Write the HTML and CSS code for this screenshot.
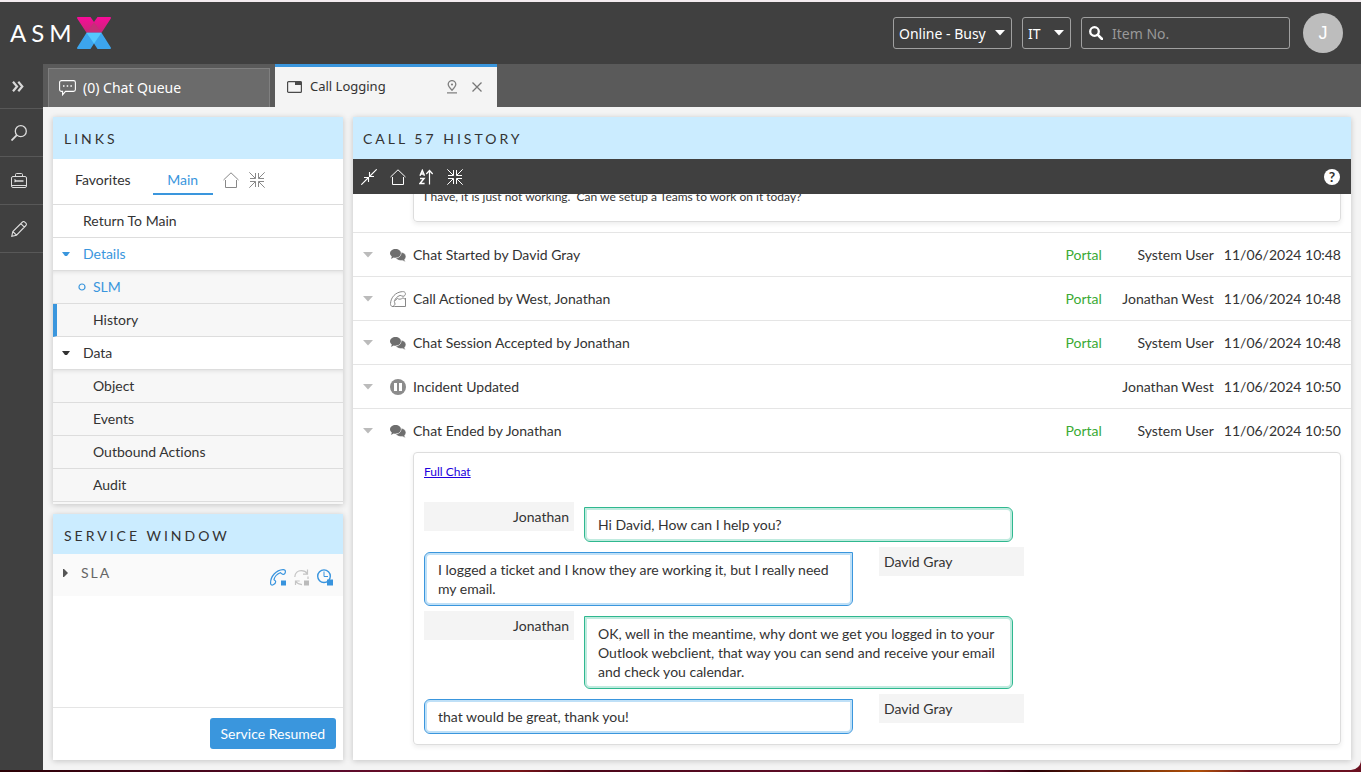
FILE: index.html
```
<!DOCTYPE html>
<html lang="en">
<head>
<meta charset="utf-8">
<title>ASMX - Call Logging</title>
<link rel="stylesheet" href="styles.css">
</head>
<body>
<svg class="sprite" aria-hidden="true">
  <symbol id="i-house" viewBox="0 0 16 16"><path d="M.5 8 8 .8 15.500 8M2.500 8v7.500h11V8" fill="none" stroke="currentColor"/></symbol>
  <symbol id="i-collapse" viewBox="0 0 16 16"><path d="M.3.3l6 6M1 6.500h5.500V1M15.700.3l-6 6M15 6.500H9.500V1M.3 15.700l6-6M1 9.500h5.500V15M15.700 15.700l-6-6M15 9.500H9.500V15" fill="none" stroke="currentColor"/></symbol>
  <symbol id="i-down" viewBox="0 0 10 6"><path d="M0 0h10L5 5.500z" fill="currentColor"/></symbol>
  <symbol id="i-chats" viewBox="0 0 16 13"><path d="M5.600 0C8.700 0 11 1.900 11 4.300S8.700 8.700 5.600 8.700c-.7 0-1.300-.1-1.900-.3-.8.7-1.800 1.200-3.100 1.300.7-.7 1.100-1.500 1.200-2.300C.7 6.600 0 5.500 0 4.300 0 1.900 2.500 0 5.600 0z" fill="#6e6e6e"/><path d="M11.300 3.300c2.600.3 4.600 2 4.600 4.300 0 1.100-.5 2.100-1.400 2.800.1.800.5 1.500 1.100 2.100-1.200-.1-2.100-.5-2.900-1.100-2.800.6-5.900-.3-6.900-2.300 3.200-.2 5.700-2.500 5.500-5.800z" fill="#6e6e6e" stroke="#fff" stroke-width=".4"/></symbol>
</svg>
<div class="app">
  <header class="topbar">
    <div class="logo">
      <span class="logo-text">ASM</span>
      <svg class="logo-mark" viewBox="0 0 34 32" aria-hidden="true">
        <defs>
          <linearGradient id="pink" x1="0" y1="0" x2="0" y2="1"><stop offset="0" stop-color="#f90b9a"/><stop offset="1" stop-color="#c62877"/></linearGradient>
        </defs>
        <path d="M1 0h12.500L17 5 20.500 0H33c1 0 1.200.8.800 1.500L24.500 15.700h-15L.2 1.500C-.2.800 0 0 1 0z" fill="url(#pink)"/>
        <path d="M17 5l7.500 10.700h-15z" fill="#c72d78"/>
        <path d="M9.500 15.700h15l9.300 14.800c.4.700.2 1.500-.8 1.500H20.500L17 26.500 13.500 32H1c-1 0-1.200-.8-.8-1.500z" fill="#3ca5ee"/>
        <path d="M9.500 15.700h15L17 26.500z" fill="#54c8ff"/>
      </svg>
    </div>
    <div class="topbar-tools">
      <div class="picker picker-status">
        <select class="picker-select" aria-label="Status"><option>Online - Busy</option></select>
        <svg class="picker-arrow" aria-hidden="true"><use href="#i-down"/></svg>
      </div>
      <div class="picker picker-group">
        <select class="picker-select" aria-label="Group"><option>IT</option></select>
        <svg class="picker-arrow" aria-hidden="true"><use href="#i-down"/></svg>
      </div>
      <label class="search">
        <svg class="search-icon" viewBox="0 0 14 14" aria-hidden="true"><circle cx="5.500" cy="5.500" r="4.300" fill="none" stroke="#fff" stroke-width="2.300"/><path d="M8.800 8.800l4.200 4.200" stroke="#fff" stroke-width="2.600" stroke-linecap="round"/></svg>
        <input class="search-input" type="text" placeholder="Item No." aria-label="Item No.">
      </label>
      <button class="avatar" type="button">J</button>
    </div>
  </header>

  <div class="workspace">
    <nav class="rail" aria-label="Tools">
      <button class="rail-item rail-expand" type="button" aria-label="Expand">
        <svg width="12" height="11" viewBox="0 0 12 11"><path d="M1 .8l4 4.700-4 4.700M6.300.8l4 4.700-4 4.700" fill="none" stroke="#d8d8d8" stroke-width="2.200"/></svg>
      </button>
      <button class="rail-item" type="button" aria-label="Search">
        <svg width="16" height="16" viewBox="0 0 16 16"><circle cx="9.800" cy="6.200" r="5.500" fill="none" stroke="#ddd" stroke-width="1.300"/><path d="M5.800 10.200L.5 15.500" stroke="#ddd" stroke-width="1.800"/></svg>
      </button>
      <button class="rail-item" type="button" aria-label="Toolbox">
        <svg width="16" height="15" viewBox="0 0 16 15"><g fill="none" stroke="#ddd"><rect x=".5" y="3.500" width="15" height="11" rx="1.500"/><path d="M4.500 3.500v-2c0-.6.4-1 1-1h5c.6 0 1 .4 1 1v2M1 12.500h14" /><path d="M3.500 6.500l1.500 1.500-1.500 1M5 8h7.500" stroke-width="1.300"/></g></svg>
      </button>
      <button class="rail-item" type="button" aria-label="Edit">
        <svg width="16" height="16" viewBox="0 0 16 16"><g fill="none" stroke="#ddd" stroke-width="1.100"><path d="M.8 15.200l1-4.700L11.500 1c.7-.7 1.600-.6 2.300.1l1.100 1.100c.7.7.7 1.600 0 2.300L5.500 14.200zM9.800 2.600l3.600 3.600M1.800 10.500l3.700 3.700"/></g></svg>
      </button>
    </nav>

    <div class="stage">
      <div class="tabs">
        <button class="tab" type="button">
          <svg class="tab-icon" width="17" height="16" viewBox="0 0 17 16"><path d="M2.500.6h12c1.100 0 1.900.8 1.900 1.900v7c0 1.100-.8 1.900-1.900 1.900H6.500L3.600 14.800v-3.400H2.500C1.400 11.400.6 10.600.6 9.500v-7C.6 1.400 1.400.6 2.500.6z" fill="none" stroke="#fff" stroke-width="1.100"/><path d="M4 5.200h1.500v1.500H4zM7.700 5.200h1.500v1.500H7.700zM11.400 5.200h1.500v1.500h-1.500z" fill="#fff"/></svg>
          <span>(0) Chat Queue</span>
        </button>
        <div class="tab tab-active">
          <svg class="tab-icon" width="15" height="12" viewBox="0 0 15 12"><rect x=".6" y=".6" width="13.800" height="10.800" rx="1" fill="none" stroke="#4a4a4a" stroke-width="1.200"/><path d="M8 .5h6.500V4H8z" fill="#4a4a4a"/></svg>
          <span class="tab-label">Call Logging</span>
          <button class="tab-action" type="button" aria-label="Pin">
            <svg width="10" height="14" viewBox="0 0 10 14"><path d="M5 10.300C3 8.200 1.200 6.300 1.200 4.300A3.700 3.700 0 0 1 5 .6a3.700 3.700 0 0 1 3.800 3.700c0 2-1.800 3.900-3.800 6zM0 12.900h10" fill="none" stroke="#808080" stroke-width="1.300"/><circle cx="5" cy="4.500" r="1.100" fill="#808080"/></svg>
          </button>
          <button class="tab-action" type="button" aria-label="Close">
            <svg width="10" height="10" viewBox="0 0 10 10"><path d="M.5.5l9 9M9.500.5l-9 9" stroke="#777" stroke-width="1.300"/></svg>
          </button>
        </div>
      </div>

      <main class="content">
        <div class="side">
          <section class="panel links">
            <h2 class="panel-title">LINKS</h2>
            <div class="link-tabs">
              <button class="link-tab" type="button">Favorites</button>
              <button class="link-tab link-tab-active" type="button">Main</button>
              <button class="icon-button" type="button" aria-label="Home"><svg width="16" height="16"><use href="#i-house"/></svg></button>
              <button class="icon-button" type="button" aria-label="Collapse"><svg width="16" height="16"><use href="#i-collapse"/></svg></button>
            </div>
            <ul class="tree">
              <li class="node"><a class="node-link" href="#">Return To Main</a></li>
              <li class="node node-blue"><svg class="node-caret" width="8" height="4" viewBox="0 0 8 4"><path d="M0 0h8L5 4H3z" fill="currentColor"/></svg><a class="node-link" href="#">Details</a></li>
              <li class="node node-sub node-first node-blue"><svg class="node-dot" width="8" height="8" viewBox="0 0 8 8"><circle cx="4" cy="4" r="3" fill="none" stroke="currentColor" stroke-width="1.200"/></svg><a class="node-link" href="#">SLM</a></li>
              <li class="node node-sub node-current"><a class="node-link" href="#">History</a></li>
              <li class="node"><svg class="node-caret" width="8" height="4" viewBox="0 0 8 4"><path d="M0 0h8L5 4H3z" fill="currentColor"/></svg><a class="node-link" href="#">Data</a></li>
              <li class="node node-sub node-first"><a class="node-link" href="#">Object</a></li>
              <li class="node node-sub"><a class="node-link" href="#">Events</a></li>
              <li class="node node-sub"><a class="node-link" href="#">Outbound Actions</a></li>
              <li class="node node-sub"><a class="node-link" href="#">Audit</a></li>
            </ul>
          </section>

          <section class="panel service">
            <h2 class="panel-title panel-title-short">SERVICE WINDOW</h2>
            <div class="sla">
              <svg class="sla-caret" width="5" height="8" viewBox="0 0 5 8"><path d="M0 0h1l4 4-4 4H0z" fill="#555"/></svg>
              <span class="sla-name">SLA</span>
              <div class="sla-icons">
                <svg width="16" height="17" viewBox="0 0 16 17"><path d="M3.200 15.800c-1.600.8-2.700-.3-2.600-1.900C.5 7.500 6 1 13 .6c1.300-.1 2.400.6 2.400 1.800 0 1.700-.9 3-2.400 2.900-1.500 0-1.900-1.600-2.800-1.600C7.500 4.800 4.600 7.800 4 10.500c0 .9 1.700.9 1.700 2.300 0 1.400-1.200 2.400-2.500 3z" fill="none" stroke="#3894de" stroke-width="1.200"/><path d="M11 11.500h5v5h-5z" fill="#3894de"/></svg>
                <svg width="15" height="17" viewBox="0 0 15 17"><path d="M.8 8C1 3.800 4 1.700 7.300 1.700c2.500 0 4.700 1 6 3M13.500.5v4.700H9M14 7.500v2.500M1.500 16v-4h4.200M1.800 12.500c1.500 2 3.600 3 6.200 3.200" fill="none" stroke="#c4c4c4" stroke-width="1.200"/><path d="M10 11.500h5v5h-5z" fill="#bbb"/></svg>
                <svg width="16" height="17" viewBox="0 0 16 17"><circle cx="7" cy="7.200" r="6.300" fill="none" stroke="#3894de" stroke-width="1.400"/><path d="M7 2.500V7.500h4" fill="none" stroke="#3894de"/><path d="M10 10.500h6v6h-6z" fill="#3894de"/></svg>
              </div>
            </div>
            <div class="service-actions"><button class="primary" type="button">Service Resumed</button></div>
          </section>
        </div>

        <section class="panel history">
          <h2 class="panel-title">CALL 57 HISTORY</h2>
          <div class="toolbar">
            <button class="tool" type="button" aria-label="Shrink"><svg width="16" height="16" viewBox="0 0 16 16"><path d="M15.700.3L9 7M8.500 3v4.500H13M.3 15.700L7 9M3 8.500h4.500V13" fill="none" stroke="#fff" stroke-width="1.100"/></svg></button>
            <button class="tool" type="button" aria-label="Home"><svg width="16" height="16"><use href="#i-house"/></svg></button>
            <button class="tool" type="button" aria-label="Sort"><svg width="15" height="16" viewBox="0 0 15 16"><path d="M1 6.800L3.300 1.500 5.500 6.800M1.800 5h3M1 9.500h4L1 14.500h4.600" fill="none" stroke="#fff" stroke-width="1.500"/><path d="M10.500 15.500V1.500M7.300 5L10.500 1.500 13.700 5" fill="none" stroke="#fff" stroke-width="1.200"/></svg></button>
            <button class="tool" type="button" aria-label="Collapse all"><svg width="16" height="16"><use href="#i-collapse"/></svg></button>
            <button class="help" type="button">?</button>
          </div>
          <div class="log">
            <div class="card card-note">
              <p class="note">I have, it is just not working.&nbsp; Can we setup a Teams to work on it today?</p>
            </div>
            <article class="entry">
              <svg class="entry-caret"><use href="#i-down"/></svg>
              <svg class="entry-icon entry-chat" width="16" height="13"><use href="#i-chats"/></svg>
              <span class="entry-title">Chat Started by David Gray</span>
              <span class="entry-source">Portal</span><span class="entry-user">System User</span><time>11/06/2024 10:48</time>
            </article>
            <article class="entry">
              <svg class="entry-caret"><use href="#i-down"/></svg>
              <svg class="entry-icon" width="16" height="16" viewBox="0 0 16 16"><g fill="none" stroke="#888"><path d="M4.500 15.500h11V7"/><path d="M4.500 15.500H2c-1-.5-1.600-1.500-1.500-3C.8 6.500 5.500 1 12.500.6c1.500-.1 2.700.5 2.900 1.800.2 1.500-.8 2.900-2.300 2.900-1.300 0-2-1-3-.9-3 1-5.200 3.400-5.800 6.300 0 .8.900 1.300.7 2.300-.2 1.200-1.200 2-2.300 2.500"/><path d="M5 9.500l2.500-2c1.500 1.200 3.500.9 5.500-.7l2.500 1.700"/></g></svg>
              <span class="entry-title">Call Actioned by West, Jonathan</span>
              <span class="entry-source">Portal</span><span class="entry-user">Jonathan West</span><time>11/06/2024 10:48</time>
            </article>
            <article class="entry">
              <svg class="entry-caret"><use href="#i-down"/></svg>
              <svg class="entry-icon entry-chat" width="16" height="13"><use href="#i-chats"/></svg>
              <span class="entry-title">Chat Session Accepted by Jonathan</span>
              <span class="entry-source">Portal</span><span class="entry-user">System User</span><time>11/06/2024 10:48</time>
            </article>
            <article class="entry">
              <svg class="entry-caret"><use href="#i-down"/></svg>
              <svg class="entry-icon" width="16" height="16" viewBox="0 0 16 16"><circle cx="8" cy="8" r="8" fill="#8c8c8c"/><path d="M4 4h3v8H4zM9 4h3v8H9z" fill="#fff"/></svg>
              <span class="entry-title">Incident Updated</span>
              <span class="entry-user">Jonathan West</span><time>11/06/2024 10:50</time>
            </article>
            <article class="entry">
              <svg class="entry-caret"><use href="#i-down"/></svg>
              <svg class="entry-icon entry-chat" width="16" height="13"><use href="#i-chats"/></svg>
              <span class="entry-title">Chat Ended by Jonathan</span>
              <span class="entry-source">Portal</span><span class="entry-user">System User</span><time>11/06/2024 10:50</time>
            </article>
            <div class="card">
              <a class="full-chat" href="#">Full Chat</a>
              <div class="turn agent"><span class="speaker">Jonathan</span><p class="bubble">Hi David, How can I help you?</p></div>
              <div class="turn customer"><p class="bubble">I logged a ticket and I know they are working it, but I really need my email.</p><span class="speaker">David Gray</span></div>
              <div class="turn agent"><span class="speaker">Jonathan</span><p class="bubble">OK, well in the meantime, why dont we get you logged in to your Outlook webclient, that way you can send and receive your email and check you calendar.</p></div>
              <div class="turn customer"><p class="bubble">that would be great, thank you!</p><span class="speaker">David Gray</span></div>
            </div>
          </div>
        </section>
      </main>
    </div>
  </div>
</div>
</body>
</html>
```

FILE: styles.css
```
* { box-sizing: border-box; }

body {
  margin: 0;
  font: 14px/19px Lato, "Liberation Sans", sans-serif;
  font-variant-ligatures: none;
  color: #333;
  background: linear-gradient(90deg, #2a0005, #5c0a2c 25%, #7a1518 38%, #4a0618 42%, #6a1030 72%, #2a0005 76%, #b05008 88%, #6a1020 92%);
}

button, input, select { font: inherit; font-variant-ligatures: none; color: inherit; }
button { padding: 0; border: 0; background: none; cursor: pointer; }
svg { display: block; flex: none; }
p, h2, ul { margin: 0; padding: 0; }

.sprite { position: absolute; width: 0; height: 0; }

.app {
  display: flex;
  flex-direction: column;
  height: calc(100vh - 2px);
  border-top: 2px solid #f3ecf0;
  border-radius: 0 0 10px 0;
  overflow: hidden;
  background: #f4f4f4;
}

/* Top bar */
.topbar {
  display: flex;
  align-items: center;
  justify-content: space-between;
  flex: none;
  height: 62px;
  padding: 0 18px 0 10px;
  background: #404040;
  color: #fff;
}
.logo { display: flex; align-items: center; }
.logo-text { font-size: 24px; line-height: 32px; letter-spacing: 5px; }
.logo-mark { width: 34px; height: 32px; }
.topbar-tools { display: flex; align-items: center; gap: 10px; font-family: "Noto Sans", sans-serif; }
.picker {
  display: grid;
  align-items: center;
  height: 32px;
  border: 1px solid #a0a0a0;
  border-radius: 3px;
}
.picker-status { width: 119px; }
.picker-group { width: 49px; }
.picker-select, .picker-arrow { grid-area: 1 / 1; }
.picker-select {
  width: 100%;
  height: 30px;
  padding: 0 5px;
  border: 0;
  appearance: none;
  background: none;
}
.picker-arrow { width: 10px; height: 6px; margin-right: 6px; justify-self: end; pointer-events: none; }
.search {
  display: flex;
  align-items: center;
  gap: 9px;
  width: 209px;
  height: 32px;
  padding: 0 7px;
  border: 1px solid #a0a0a0;
  border-radius: 3px;
}
.search-icon { width: 14px; height: 14px; }
.search-input { flex: 1; min-width: 0; padding: 0; border: 0; outline: 0; background: none; }
.search-input::placeholder { color: #999; opacity: 1; }
.avatar {
  width: 40px;
  height: 40px;
  margin-left: 3px;
  border-radius: 50%;
  background: #bdbdbd;
  font: 18px "Liberation Sans", sans-serif;
}

/* Left rail */
.workspace { display: flex; flex: 1; min-height: 0; }
.rail { flex: none; width: 43px; background: #404040; }
.rail-item {
  display: flex;
  align-items: center;
  width: 100%;
  height: 48px;
  padding-left: 11px;
  border-bottom: 1px solid #585858;
}
.rail-expand { height: 45px; padding-left: 12px; }

/* Work tabs */
.stage { display: flex; flex: 1; flex-direction: column; min-width: 0; }
.tabs {
  display: flex;
  align-items: flex-end;
  gap: 5px;
  flex: none;
  height: 43px;
  padding-left: 5px;
  background: #5a5a5a;
  font-family: "Noto Sans", sans-serif;
}
.tab {
  display: flex;
  align-items: center;
  gap: 7px;
  width: 222px;
  height: 39px;
  padding: 0 10px 1px;
  border: 1px solid #808080;
  border-bottom: 0;
  background: #6b6b6b;
  color: #fff;
}
.tab-active {
  gap: 8px;
  height: 43px;
  padding: 0 15px 1px 12px;
  border: 0;
  border-top: 3px solid #3a96dd;
  background: #f4f4f4;
  color: #333;
}
.tab-label { flex: 1; font-size: 13px; }
.tab-action + .tab-action { margin-left: 7px; }

/* Panels */
.content { display: flex; flex: 1; gap: 10px; min-height: 0; padding: 10px; }
.side { display: flex; flex: none; flex-direction: column; gap: 10px; width: 290px; }
.panel {
  display: flex;
  flex-direction: column;
  background: #fff;
  box-shadow: 0 1px 6px rgba(0, 0, 0, .2);
}
.panel-title {
  flex: none;
  height: 42px;
  padding: 2px 11px 0;
  background: #cbecff;
  font-size: 14px;
  font-weight: 400;
  line-height: 40px;
  letter-spacing: 3px;
}
.panel-title-short { height: 40px; }

.link-tabs {
  display: flex;
  align-items: center;
  height: 46px;
  padding: 0 0 4px 12px;
  border-bottom: 1px solid #ddd;
}
.link-tab { height: 30px; margin-right: 10px; padding: 2px 10px 0; border-bottom: 2px solid transparent; }
.link-tab-active { width: 60px; margin-left: 2px; border-color: #3a96dd; color: #3a96dd; }
.icon-button { margin-right: 10px; color: #888; }

.tree { padding-bottom: 2px; list-style: none; background: #f7f7f7; }
.node {
  display: flex;
  align-items: center;
  height: 33px;
  padding: 0 0 1px 30px;
  border-bottom: 1px solid #ddd;
  background: #fff;
}
.node-link { color: inherit; text-decoration: none; }
.node-blue { color: #3a96dd; }
.node-caret { margin: 0 13px 0 -21px; }
.node-sub { padding-left: 40px; background: #f7f7f7; }
.node-first { box-shadow: inset 0 3px 4px -2px rgba(0, 0, 0, .1); }
.node-dot { margin: 0 7px 0 -15px; }
.node-current { padding-left: 36px; border-left: 4px solid #3a96dd; }

.service { flex: 1; }
.sla { display: flex; align-items: center; height: 42px; padding: 0 10px 5px; background: #fafafa; }
.sla-name { flex: 1; margin-left: 13px; color: #666; letter-spacing: 2px; }
.sla-icons { display: flex; align-self: flex-end; gap: 8px; padding-bottom: 5px; }
.service-actions {
  display: flex;
  justify-content: flex-end;
  margin-top: auto;
  padding: 10px 7px 11px;
  border-top: 1px solid #e5e5e5;
}
.primary { height: 31px; padding: 0 11px; border-radius: 3px; background: #3a96dd; color: #fff; }

/* History */
.history { flex: 1; min-width: 0; }
.history .panel-title { padding-left: 10px; }
.toolbar {
  display: flex;
  align-items: center;
  gap: 13px;
  flex: none;
  height: 35px;
  padding: 0 11px 0 8px;
  background: #404040;
  color: #fff;
}
.help {
  width: 16px;
  height: 16px;
  margin-left: auto;
  border-radius: 50%;
  background: #fff;
  color: #333;
  font: bold 14px/16px Lato, sans-serif;
}
.log {
  display: flex;
  flex: 1;
  flex-direction: column;
  justify-content: flex-end;
  min-height: 0;
  padding-bottom: 15px;
  overflow: hidden;
}
.entry {
  display: flex;
  align-items: center;
  flex: none;
  height: 44px;
  padding: 0 10px;
  border-top: 1px solid #e5e5e5;
}
.entry-caret { width: 10px; height: 6px; margin-right: 17px; color: #bbb; }
.entry-icon { margin-right: 7px; }
.entry-chat { margin-top: 2px; }
.entry-title { flex: 1; }
.entry-source { color: #3aaa35; }
.entry-user { width: 112px; margin-right: 10px; text-align: right; }
.card {
  flex: none;
  margin: 0 10px 0 60px;
  padding: 9px 10px 5px;
  border: 1px solid #ddd;
  border-radius: 4px;
  box-shadow: 0 2px 5px rgba(0, 0, 0, .08);
}
.card-note { margin-bottom: 10px; padding-bottom: 15px; }
.note { font-size: 12px; }
.full-chat { display: block; width: max-content; margin-bottom: 21px; color: #20d; font-size: 12px; }
.turn { display: flex; align-items: flex-start; }
.speaker { flex: none; padding: 5px; background: #f4f4f4; }
.agent .speaker { width: 150px; margin-right: 10px; text-align: right; }
.customer .speaker { width: 145px; margin-left: 26px; }
.bubble { flex: none; width: 429px; margin: 5px 0; padding: 7px 13px; border: 1px solid; }
.agent .bubble {
  border-color: #2fb88f;
  border-radius: 0 6px 6px 6px;
  box-shadow: inset 0 0 0 2px #c0ebdf;
}
.customer .bubble {
  border-color: #3a96dd;
  border-radius: 6px 0 6px 6px;
  box-shadow: inset 0 0 0 2px #bfe0f7;
}
```
